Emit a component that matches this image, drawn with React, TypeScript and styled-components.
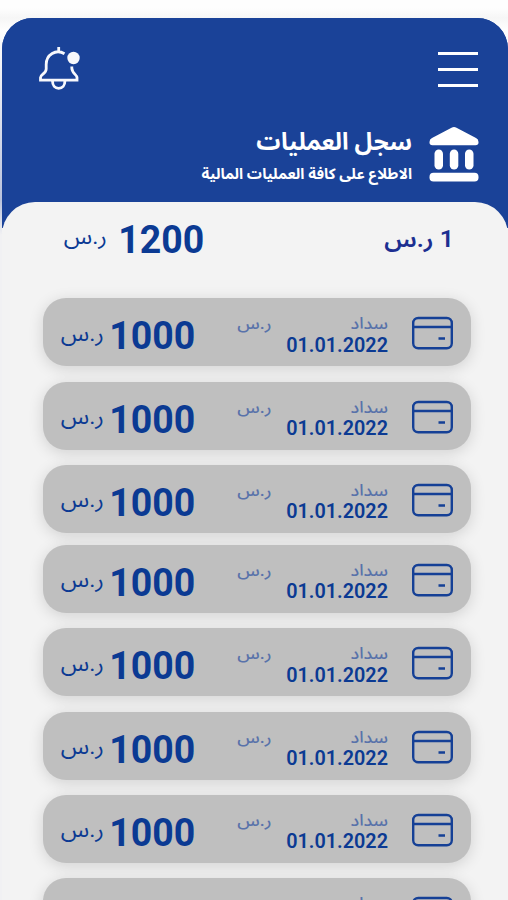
import React from "react";
import styled, { createGlobalStyle } from "styled-components";

const GlobalStyle = createGlobalStyle`
  * { box-sizing: border-box; }
  html, body { margin: 0; background: #fefefe; }
  body { height: 900px; overflow: hidden; font-family: Roboto, "Noto Sans Arabic", "Noto Sans", "DejaVu Sans", sans-serif; }
`;

const Screen = styled.div`
  height: 900px;
  padding: 18px 0 0 2px;
  overflow: hidden;
  background: linear-gradient(#fefefe 0, #fefefe 8px, #f6f6f6 18px, #fefefe 30px, #f4f5f9 60px, #b9c2dc 200px, #f1f1f3 235px);
`;

const Phone = styled.main`
  display: flex;
  flex-direction: column;
  height: 882px;
  border-radius: 31px 31px 0 0;
  background: linear-gradient(#1a4298 0 210px, #f3f3f3 210px);
  overflow: hidden;
  direction: rtl;
`;

const Header = styled.header`
  height: 184px;
  flex: none;
  background: #1a4298;
  color: #fff;
`;

const Toolbar = styled.div`
  display: flex;
  justify-content: space-between;
  height: 106px;
  padding: 28px 30px 0 37px;
`;

const MenuButton = styled.button`
  display: flex;
  flex-direction: column;
  gap: 13px;
  width: 40px;
  height: 46px;
  padding: 6px 0 0;
  border: 0;
  background: none;
`;

const MenuBar = styled.span`
  height: 3px;
  width: 40px;
  flex: none;
  background: #fff;
`;

const BellButton = styled.button`
  width: 42px;
  height: 46px;
  padding: 0;
  border: 0;
  background: none;
`;

const Heading = styled.div`
  display: flex;
  gap: 17px;
  padding: 3px 29px 0 0;
`;

const Label = styled.span<{ $size: number; $weight?: number; $width: number; $top?: number; $color?: string; $stretch?: number }>`
  display: block;
  flex: none;
  width: ${(p) => p.$width}px;
  height: 20px;
  margin-top: ${(p) => p.$top ?? 0}px;
  font-size: ${(p) => p.$size}px;
  font-weight: ${(p) => p.$weight ?? 400};
  line-height: 20px;
  color: ${(p) => p.$color ?? "#0b3a93"};
  white-space: nowrap;
  transform: scaleX(${(p) => p.$stretch ?? 1});
  transform-origin: right center;
`;

const UnitLabel = styled(Label)`
  padding-right: 12px;
`;

const Panel = styled.section`
  flex: 1;
  border-radius: 33px 33px 0 0;
  background: #f3f3f3;
`;

const Summary = styled.div`
  display: flex;
  justify-content: space-between;
  height: 96px;
  padding: 0 54px 0 60px;
`;

const Balance = styled.div`
  display: flex;
  gap: 10px;
  direction: ltr;
`;

const Cards = styled.div`
  display: flex;
  flex-direction: column;
  padding: 0 37px 0 41px;
`;

const Card = styled.article<{ $gap: number }>`
  display: flex;
  flex: none;
  height: 68px;
  margin-bottom: ${(p) => p.$gap}px;
  padding: 0 18px 0 17px;
  border-radius: 23px;
  background: #bfbfbf;
  box-shadow: 0 3px 15px rgba(0, 0, 0, 0.14);
`;

const IconCell = styled.div`
  width: 41px;
  margin: 18px 0 0 24px;
`;

const Details = styled.div`
  width: 103px;
  padding-top: 16px;
`;

const Amount = styled.div`
  display: flex;
  gap: 4px;
  margin-right: auto;
  direction: ltr;
`;

const BellIcon = () => (
  <svg width="42" height="46" viewBox="0 0 42 46" fill="none" stroke="#f7f8fc" strokeWidth="2.8">
    <path d="M25.500 7.800C17 2.500 7.200 8.800 7.200 18.500V23c0 4.500-5.700 5.500-5.700 8.500v2.700H38v-2.700c0-2.500-5.200-4.500-5.200-9.500V20.500M19.700 1V6" />
    <path d="M13.500 35c0 4.500 2.500 7.300 6.200 7.300s6.200-2.800 6.200-7.300" />
    <circle cx="34.500" cy="12" r="6.200" fill="#f7f8fc" stroke="none" />
  </svg>
);

const BankIcon = () => (
  <svg width="50" height="56" viewBox="0 0 50 56" fill="#fff">
    <path d="M22.500 0.700q2.500-1.200 5 0L47 11q2.500 1.200 2.500 4v.5q0 2.700-3 2.700h-43q-3 0-3-2.700V15q0-2.800 2.500-4Z" />
    <rect x="5.500" y="22.500" width="8.500" height="20" rx="4.250" />
    <rect x="20.800" y="22.500" width="8.500" height="20" rx="4.250" />
    <rect x="36" y="22.500" width="8.500" height="20" rx="4.250" />
    <rect x="0.500" y="45.700" width="49" height="8.800" rx="4" />
  </svg>
);

const CardIcon = () => (
  <svg width="41" height="34" viewBox="0 0 41 34" fill="none" stroke="#154096" strokeWidth="2.4">
    <rect x="1.200" y="2" width="38.600" height="30.300" rx="5" />
    <path d="M1 11H40M26.500 22.500H33" />
  </svg>
);

const gaps = [15.5, 15.3, 12, 15.4, 15.4, 15.4, 15, 0];

export default function App() {
  return (
    <>
      <GlobalStyle />
      <Screen>
        <Phone>
          <Header>
            <Toolbar>
              <MenuButton aria-label="القائمة">
                <MenuBar /><MenuBar /><MenuBar />
              </MenuButton>
              <BellButton aria-label="الإشعارات"><BellIcon /></BellButton>
            </Toolbar>
            <Heading>
              <BankIcon />
              <div>
                <Label $size={24} $weight={700} $width={160} $top={4.5} $color="#fff">سجل العمليات</Label>
                <Label $size={15} $weight={700} $width={214} $top={12} $color="#fff">الاطلاع على كافة العمليات المالية</Label>
              </div>
            </Heading>
          </Header>
          <Panel>
            <Summary>
              <Label $size={23} $weight={600} $width={70} $top={28} $stretch={1.08} $color="#1c2f91">1 ر.س</Label>
              <Balance>
                <Label $size={22} $width={45} $top={25} $stretch={1.07} dir="rtl">ر.س</Label>
                <Label $size={38} $weight={700} $width={86} $top={28} $stretch={0.985}>1200</Label>
              </Balance>
            </Summary>
            <Cards>
              {gaps.map((gap, i) => (
                <Card key={i} $gap={gap}>
                  <IconCell><CardIcon /></IconCell>
                  <Details>
                    <Label $size={16} $width={103} $color="#5872aa" $weight={500} $stretch={1.11}>سداد</Label>
                    <Label $size={20} $weight={600} $width={103} $top={0.5} $stretch={0.99}>01.01.2022</Label>
                  </Details>
                  <UnitLabel $size={16} $width={49} $top={16} $color="#5872aa" $weight={500} $stretch={1.12}>ر.س</UnitLabel>
                  <Amount>
                    <Label $size={22} $width={44} $top={25.5} $stretch={1.07} dir="rtl">ر.س</Label>
                    <Label $size={38} $weight={700} $width={86} $top={28} $stretch={0.985}>1000</Label>
                  </Amount>
                </Card>
              ))}
            </Cards>
          </Panel>
        </Phone>
      </Screen>
    </>
  );
}
